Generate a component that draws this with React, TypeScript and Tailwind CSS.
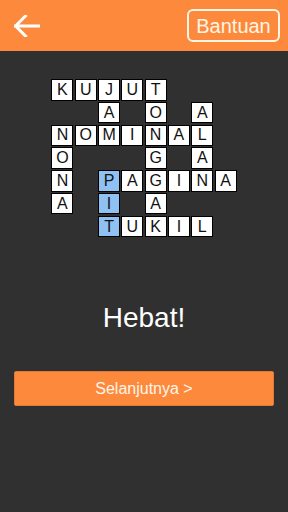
import React from "react";

const rows = [
  "KUJUT...",
  "..A.O.A.",
  "NOMINAL.",
  "O...G.A.",
  "N.PAGINA",
  "A.I.A...",
  "..TUKIL.",
];

const blue = new Set(["4-2", "5-2", "6-2"]);

export default function App() {
  return (
    <div
      className="w-[288px] h-[512px] bg-[#303030] flex flex-col items-center overflow-hidden"
      style={{ fontFamily: '"Liberation Sans", Arial, sans-serif' }}
    >
      <div className="w-full h-[51px] bg-[#fd8a3c] flex items-center justify-between pl-[14px] pr-[8px] shrink-0">
        <svg width="26" height="22" viewBox="0 0 26 22" fill="none">
          <path
            d="M1.5 11 H25 M11.5 1 L1.5 11 L11.5 21"
            stroke="white"
            strokeWidth="3"
            strokeLinecap="square"
            strokeLinejoin="miter"
          />
        </svg>
        <div className="h-[33px] w-[93px] border-2 border-[#fff5e6] rounded-[6px] flex items-center justify-center text-[20px] text-[#fff5e6] leading-none">
          Bantuan
        </div>
      </div>

      <div className="mt-[28px] grid grid-cols-[repeat(8,22px)] grid-rows-[repeat(7,21.5px)] gap-[1.3px]">
        {rows.map((row, r) =>
          row.split("").map((ch, c) =>
            ch === "." ? (
              <div key={`${r}-${c}`} />
            ) : (
              <div
                key={`${r}-${c}`}
                className={`border border-black flex items-center justify-center text-[16px] leading-none text-[#111] ${
                  blue.has(`${r}-${c}`) ? "bg-[#8fc1f3]" : "bg-white"
                }`}
              >
                {ch}
              </div>
            )
          )
        )}
      </div>

      <div className="mt-[65px] text-[28px] leading-[32px] text-white">Hebat!</div>

      <div className="mt-[37px] w-[260px] h-[35px] bg-[#fd8a3c] rounded-[2px] border border-[#e07a34] flex items-center justify-center text-[16px] text-[#fff5ea]">
        Selanjutnya &gt;
      </div>
    </div>
  );
}
